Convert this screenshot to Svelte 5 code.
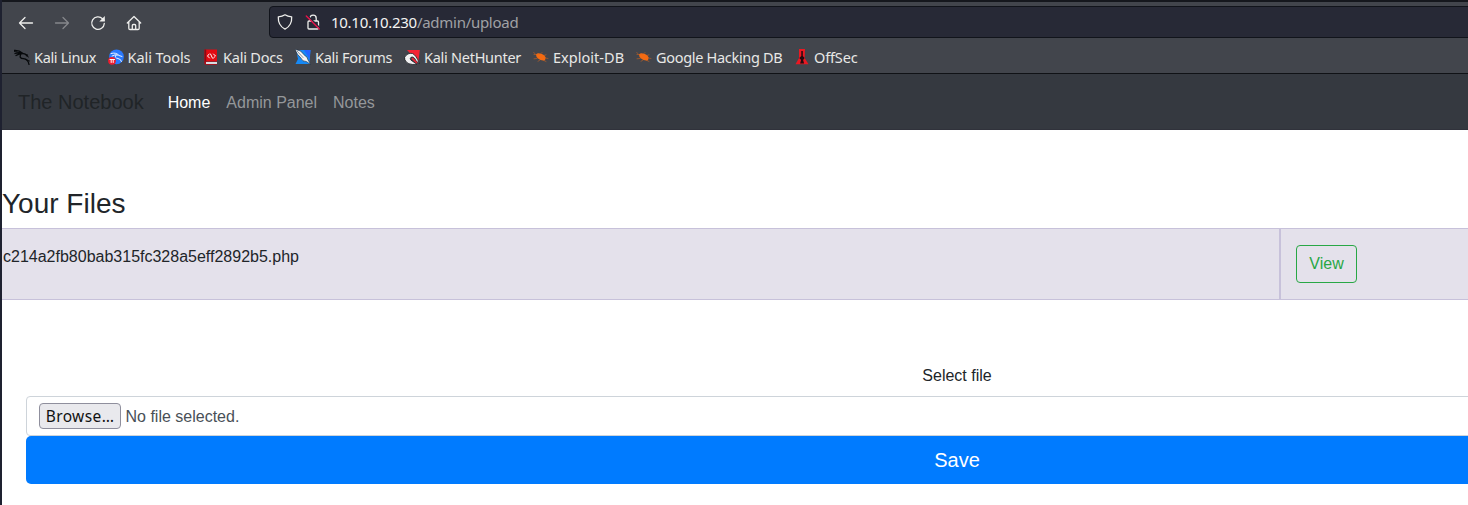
<script>
  const bookmarks = [
    { label: 'Kali Linux', icon: 'dragon', width: 93.5, tracking: -0.33 },
    { label: 'Kali Tools', icon: 'tools', width: 95.5, tracking: -0.07 },
    { label: 'Kali Docs', icon: 'docs', width: 92, tracking: -0.22 },
    { label: 'Kali Forums', icon: 'forums', width: 109, tracking: -0.27 },
    { label: 'Kali NetHunter', icon: 'nethunter', width: 129, tracking: -0.27 },
    { label: 'Exploit-DB', icon: 'bug', width: 103, tracking: 0.03 },
    { label: 'Google Hacking DB', icon: 'bug', width: 158, tracking: -0.31 },
    { label: 'OffSec', icon: 'offsec', width: 80, tracking: -0.15 }
  ];
</script>

<div class="window">
  <header class="chrome">
    <div class="toolbar">
      <div class="controls">
        <svg viewBox="0 0 16 16"><path d="M14.500 8H1.500M7 2.500L1.500 8l5.500 5.500" /></svg>
        <svg class="dim" viewBox="0 0 16 16"><path d="M1.500 8h13M9 2.500l5.500 5.500L9 13.500" /></svg>
        <svg viewBox="0 0 16 16"><path d="M14.300 8.500A6.300 6.300 0 1 1 12.500 3.700L14 5.200" /><path class="solid" d="M14.800 1v5.500H9.300z" /></svg>
        <svg viewBox="0 0 16 16"><path d="M1.300 8L8 1.500 14.700 8M2.800 7v6.300q0 1.200 1.200 1.200h8q1.200 0 1.200-1.200V7M6.300 14.500v-4q0-1 1-1h1.400q1 0 1 1v4" /></svg>
      </div>
      <div class="address">
        <svg viewBox="0 0 16 16"><path d="M8 .8C6.300 2 4 2.700 1.300 2.900c-.3 5.800 1.700 9.700 6.700 12.300 5-2.600 7-6.500 6.700-12.300C12 2.700 9.700 2 8 .8z" /></svg>
        <svg viewBox="0 0 16 16"><path d="M5 7V4.300a3.100 3.100 0 0 1 6.200 0V7M4 7h8.500q1 0 1 1v6q0 1-1 1H4q-1 0-1-1V8q0-1 1-1z" /><path class="gap" d="M2.500 1.500l13 13" /><path class="slash" d="M1.300 2L14.300 15" /></svg>
        <span class="url"><b>10.10.10.230</b>/admin/upload</span>
      </div>
    </div>
    <nav class="bookmarks">
      {#each bookmarks as item}
        <a style:width="{item.width}px" style:letter-spacing="{item.tracking}px">
          <svg viewBox="0 0 16 16">
            {#if item.icon === 'dragon'}
              <g class="ink"><path d="M0 1.500Q5 1 9 4.500M1 4.500Q5 3 9 4.500M2 6.500Q5 4.500 9 4.500Q11.500 4.500 13 7M7 4.700Q4.500 9.500 9.500 9.700Q14 10 15 15.500M9 4.500L13.500 6" /><path class="fine" d="M11.500 10.500L15.500 12M0 2.500l3 .3M13 7l1.500 1" /></g>
            {:else if item.icon === 'tools'}
              <circle cx="8.500" cy="7.800" r="7.400" fill="#2879ff" />
              <path class="wing" d="M3 4.500Q8 3 11 6.500L14 7.500M4 7Q7 5 10 6M8 6Q6 9 10 9.500Q13 10 13.500 12.500" />
              <circle cx="4" cy="11.800" r="3.900" fill="#ed1c2e" />
              <path class="tiny" d="M2 10.500h4.500M3.200 10.500v3M5.200 10.500v3" />
            {:else if item.icon === 'docs'}
              <path fill="#e30a12" d="M1.500.5H14v12H1.500z" /><path fill="#8b0a14" d="M1.500.5h1.700v13H1.500z" />
              <path fill="#d8dde1" d="M3 13h11v2H3z" /><path fill="#b80915" d="M1.500 12.500H3v3H1.500zM3 15h11v.7H3z" />
              <path class="tiny" d="M6.200 5L4.500 7l2 2M10.500 5l2 2-2 2M7.500 5L9.500 9.200" />
            {:else if item.icon === 'forums'}
              <path fill="#1689f5" d="M1 1h14.500l-1 14H.5L3 10z" /><path fill="#2363ff" d="M9 1h6.500l-1 9z" />
              <path fill="#f2f3f4" stroke="#182638" stroke-width=".6" d="M0 .2L5.500 2l5 5.200q2 .5 2.300 3.300l3 5-4.500-3q-4 .2-5-3L2.700 5.500z" />
              <path stroke="#4b5865" stroke-width=".6" d="M2 2l6 6.500" />
            {:else if item.icon === 'nethunter'}
              <path fill="#f32334" d="M3 1h12.800l-1.500 12z" />
              <path fill="#f1f1f2" stroke="#1b1d22" stroke-width=".8" d="M.8 8Q3.500 3.500 8.500 4.500Q12 6 15.500 14.500L12 12Q10 7 7 8.300Q5.500 9.500 7 11.200L13 15.300Q3 16.500 1 11z" />
              <path stroke="#ed2134" stroke-width="1.700" d="M8.500 9.700l4 3.800" />
            {:else if item.icon === 'bug'}
              <path fill="#f36a12" d="M3 5.500Q4.500 3.500 7 4.500Q11 5 12.700 8.500L12 11.300Q8 12 5 9.500Q3 8 3 5.500z" />
              <path stroke="#e36818" stroke-width=".5" d="M1 5.500h5M4 9.500l-3 .3M7 11l-2 1.300M8 4.500l1-1M11 6.500l2-.7M12 9l3 .5M10 11l3 1.500M2 4.500L.7 3.700" />
            {:else}
              <path fill="#ea1822" d="M5 0h6l-.3 9 3.800 6.200h-13L5 9z" />
              <path fill="#240b10" d="M7.300 2h1.500v5l1.800 2-1.500 2 1 3.500h-4l1-3.500-1.800-2 2-2z" />
            {/if}
          </svg><span>{item.label}</span>
        </a>
      {/each}
    </nav>
  </header>

  <main>
    <nav class="navbar">
      <span class="brand">The Notebook</span>
      <a class="active">Home</a><a>Admin Panel</a><a>Notes</a>
    </nav>
    <h3>Your Files</h3>
    <section class="files">
      <div class="name">c214a2fb80bab315fc328a5eff2892b5.php</div>
      <div class="action"><button class="view">View</button></div>
    </section>
    <form>
      <label for="file">Select file</label>
      <div class="picker"><button id="file" type="button">Browse…</button><span>No file selected.</span></div>
      <button class="save" type="button">Save</button>
    </form>
  </main>
</div>

<style>
  :global(body) { margin: 0; overflow: hidden; background: #fff; }
  * { box-sizing: border-box; }
  .window {
    width: 1468px; height: 505px; overflow: hidden;
    border-left: 2px solid #1e2130;
    font-family: "Liberation Sans", Arial, sans-serif; font-size: 16px; line-height: 24px; color: #212529;
  }
  svg { flex: none; width: 16px; height: 16px; fill: none; stroke-linecap: round; stroke-linejoin: round; }
  .chrome {
    height: 74px; padding-top: 4px; background: #42454c;
    border-top: 2px solid #15171d; border-bottom: 1px solid #101216;
    font-family: "Noto Sans", sans-serif; color: #e8e8e6;
  }
  .toolbar { display: flex; height: 32px; }
  .controls { flex: none; display: flex; width: 266px; padding: 8.500px 0 0 16px; gap: 20px; }
  .controls svg, .address svg { stroke: #eeeeec; stroke-width: 1.300; }
  .controls svg.dim { stroke: #85878b; }
  svg .solid { fill: #eeeeec; stroke: none; }
  svg .gap { stroke: #272936; stroke-width: 1.500; }
  svg .slash { stroke: #e5134a; stroke-width: 1.400; }
  .address {
    flex: none; display: flex; align-items: center; gap: 12px; width: 1300px; height: 32px; margin-left: 1px; padding-left: 7px;
    background: #272936; border: 1px solid #11141b; border-radius: 4px;
  }
  .url { margin-left: -2px; font-size: 15px; letter-spacing: -.28px; color: #a0a1a5; white-space: pre; }
  .url b { font-weight: 400; color: #f4f4f2; }
  .bookmarks { display: flex; padding: 6px 0 0 12px; font-size: 14.500px; line-height: 26px; }
  .bookmarks a { flex: none; display: flex; gap: 4px; align-items: center; white-space: nowrap; }
  .ink { stroke: #07090b; stroke-width: 1.300; }
  .fine { stroke-width: .9; }
  .wing { stroke: #e7f3ff; stroke-width: 1; }
  .tiny { stroke: #fff; stroke-width: 1; }
  main { width: 1910px; background: #fff; }
  .navbar { display: flex; align-items: center; height: 56px; padding-left: 16px; background: #353940; border-bottom: 1px solid #30323b; }
  .brand { margin-right: 16px; font-size: 20px; line-height: 30px; color: #202427; }
  .navbar a { padding: 9px 8px 7px; color: #94979a; }
  .navbar a.active { color: #fff; }
  h3 { margin: 57px 0 7px; font-size: 28px; line-height: 34px; font-weight: 400; }
  .files { display: flex; height: 72px; background: #e4e1eb; border: solid #c7c1da; border-width: 1px 0; }
  .name { width: 1279px; padding: 16px 1px; border-right: 2px solid #c7c1da; }
  .action { padding: 16px 15px; }
  button { font: inherit; }
  .view { width: 61px; height: 38px; padding: 0; color: #28a745; background: transparent; border: 1px solid #28a745; border-radius: 4px; }
  form { padding: 64px 24px 0; text-align: center; }
  label { display: block; height: 32px; }
  .picker { display: flex; align-items: center; gap: 4.500px; height: 40px; padding-left: 12px; color: #495057; border: 1px solid #ced4da; border-radius: 4px; }
  .picker span { padding-top: 2px; }
  .picker button { width: 82px; height: 26px; padding: 0; font: 15.500px/22px "Noto Sans", sans-serif; letter-spacing: .4px; color: #111; background: #e9e9ed; border: 1px solid #8f8f9d; border-radius: 4px; }
  .save { display: block; width: 100%; height: 48px; color: #fff; background: #007bff; border: 0; border-radius: 5px; font-size: 20px; }
</style>
